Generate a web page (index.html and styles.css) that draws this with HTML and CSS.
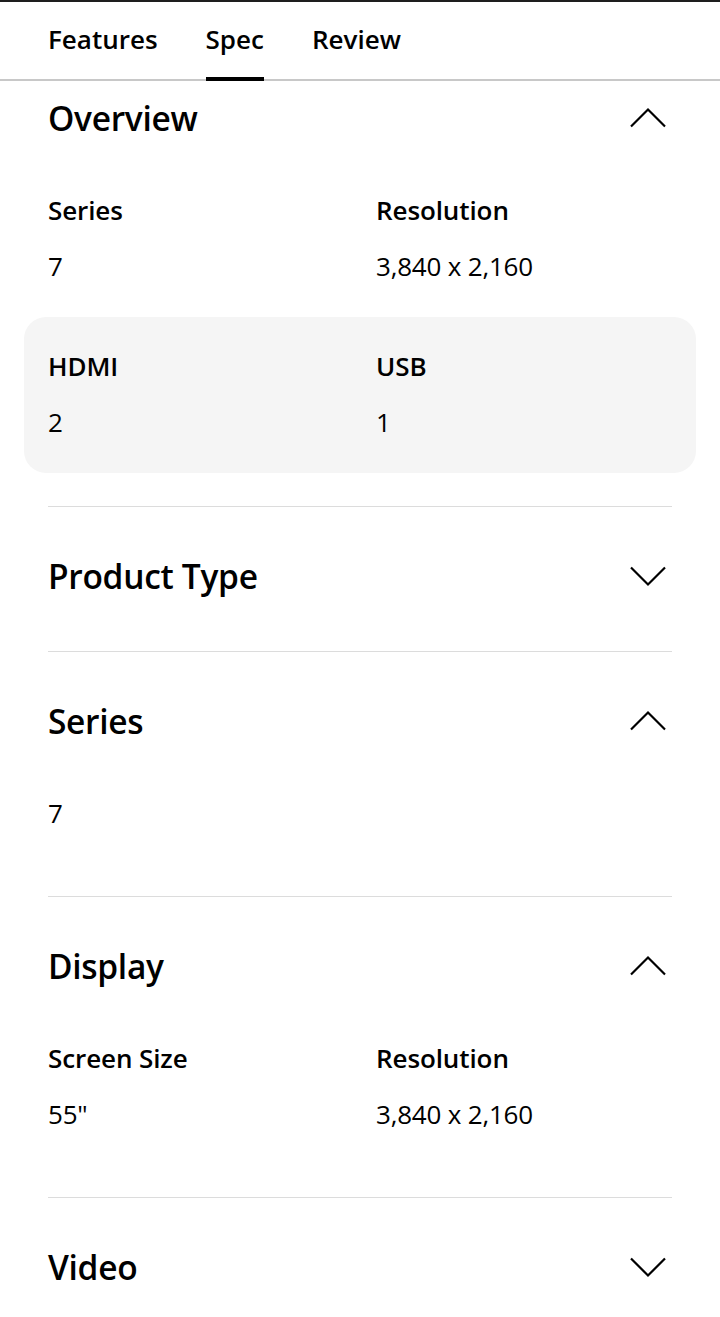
FILE: index.html
```html
<!DOCTYPE html>
<html lang="en">
<head>
<meta charset="utf-8">
<title>Spec</title>
<link rel="stylesheet" href="styles.css">
</head>
<body>
<nav class="tabs">
  <a class="tab">Features</a>
  <a class="tab active">Spec</a>
  <a class="tab">Review</a>
</nav>

<section class="spec first">
  <div class="spec-head">
    <h2>Overview</h2>
    <svg class="chev" viewBox="0 0 40 40"><path d="M3 28.5 L20 11.5 L37 28.5"/></svg>
  </div>
  <div class="spec-body">
    <div class="row">
      <div class="cell"><div class="label">Series</div><div class="value">7</div></div>
      <div class="cell"><div class="label">Resolution</div><div class="value">3,840 x 2,160</div></div>
    </div>
    <div class="row shaded">
      <div class="cell"><div class="label">HDMI</div><div class="value">2</div></div>
      <div class="cell"><div class="label">USB</div><div class="value">1</div></div>
    </div>
  </div>
</section>

<section class="spec collapsed">
  <div class="spec-head">
    <h2>Product Type</h2>
    <svg class="chev" viewBox="0 0 40 40"><path d="M3 11.5 L20 28.5 L37 11.5"/></svg>
  </div>
</section>

<section class="spec">
  <div class="spec-head">
    <h2>Series</h2>
    <svg class="chev" viewBox="0 0 40 40"><path d="M3 28.5 L20 11.5 L37 28.5"/></svg>
  </div>
  <div class="spec-body">
    <div class="row single">
      <div class="cell"><div class="value">7</div></div>
    </div>
  </div>
</section>

<section class="spec">
  <div class="spec-head">
    <h2>Display</h2>
    <svg class="chev" viewBox="0 0 40 40"><path d="M3 28.5 L20 11.5 L37 28.5"/></svg>
  </div>
  <div class="spec-body">
    <div class="row">
      <div class="cell"><div class="label">Screen Size</div><div class="value">55"</div></div>
      <div class="cell"><div class="label">Resolution</div><div class="value">3,840 x 2,160</div></div>
    </div>
  </div>
</section>

<section class="spec collapsed">
  <div class="spec-head">
    <h2>Video</h2>
    <svg class="chev" viewBox="0 0 40 40"><path d="M3 11.5 L20 28.5 L37 11.5"/></svg>
  </div>
</section>
</body>
</html>
```

FILE: styles.css
```css
html, body {
  margin: 0;
  padding: 0;
  background: #fff;
}

body {
  font-family: "Open Sans", "Noto Sans", sans-serif;
  color: #000;
  border-top: 2px solid #1e1e1e;
  overflow: hidden;
}

.tabs {
  display: flex;
  gap: 48px;
  padding: 0 48px;
  border-bottom: 2px solid #c8c8c8;
  box-sizing: border-box;
  height: 79px;
}

.tab {
  display: flex;
  align-items: center;
  font-size: 26px;
  font-weight: 600;
  letter-spacing: 0;
  padding-bottom: 2px;
  margin-bottom: -2px;
  border-bottom: 4px solid transparent;
  color: #000;
}

.tab.active {
  border-bottom-color: #000;
}

.spec {
  margin: 0 48px;
  border-top: 1px solid #dcdcdc;
  padding-bottom: 32px;
}

.spec.first {
  border-top: none;
  padding-bottom: 33px;
}

.spec.first .spec-head {
  padding-top: 17px;
}

.spec.collapsed {
  padding-bottom: 55px;
}

.spec-head {
  display: flex;
  align-items: center;
  justify-content: space-between;
  padding-top: 49px;
  height: 40px;
  box-sizing: content-box;
}

.spec-head h2 {
  margin: 0;
  font-size: 33.5px;
  font-weight: 600;
  line-height: 40px;
  letter-spacing: -0.3px;
}

.chev {
  width: 40px;
  height: 40px;
  margin-right: 4px;
  fill: none;
  stroke: #000;
  stroke-width: 2.2;
}

.spec-body {
  margin: 23px -24px 0;
}

.row {
  display: grid;
  grid-template-columns: 328px 1fr;
  padding: 31px 24px 33px;
  border-radius: 22px;
}

.row.shaded {
  background: #f5f5f5;
}

.label {
  font-size: 26px;
  font-weight: 600;
  line-height: 36px;
  letter-spacing: -0.1px;
}

.value {
  font-size: 26px;
  font-weight: 400;
  line-height: 36px;
  margin-top: 20px;
  letter-spacing: -0.2px;
}

.row.single .value {
  margin-top: 0;
}
```
